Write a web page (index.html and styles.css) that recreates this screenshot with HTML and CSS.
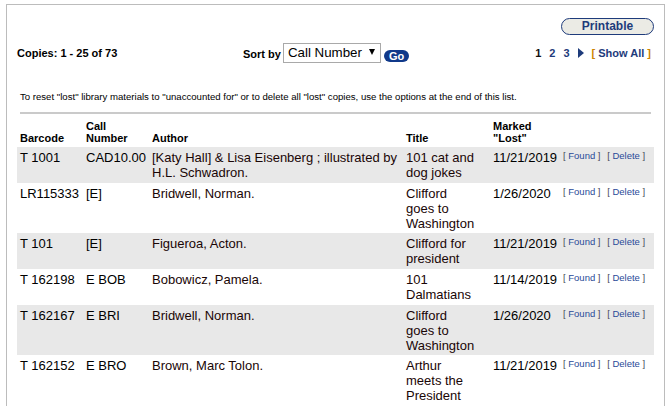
FILE: index.html
```html
<!DOCTYPE html>
<html>
<head>
<meta charset="utf-8">
<link rel="stylesheet" href="styles.css">
</head>
<body>
<div class="page">
  <div class="print-row">
    <span class="printable">Printable</span>
  </div>
  <div class="controls">
    <div class="copies">Copies: 1 - 25 of 73</div>
    <div class="sort">
      <span class="sort-label">Sort by</span>
      <span class="select"><span class="select-text">Call Number</span><span class="arrow"></span></span>
      <span class="go">Go</span>
    </div>
    <div class="pager">
      <span class="pg current">1</span>
      <span class="pg">2</span>
      <span class="pg">3</span>
      <span class="next"></span>
      <span class="showall"><span class="br">[</span> Show All <span class="br">]</span></span>
    </div>
  </div>
  <p class="note">To reset "lost" library materials to "unaccounted for" or to delete all "lost" copies, use the options at the end of this list.</p>
  <div class="rule"></div>
  <table class="list">
    <colgroup>
      <col class="c-bar"><col class="c-call"><col class="c-auth"><col class="c-title"><col class="c-date"><col class="c-act">
    </colgroup>
    <thead>
      <tr>
        <th>Barcode</th>
        <th>Call<br>Number</th>
        <th>Author</th>
        <th class="t-title">Title</th>
        <th>Marked<br>"Lost"</th>
        <th></th>
      </tr>
    </thead>
    <tbody>
      <tr class="alt">
        <td>T 1001</td><td>CAD10.00</td><td class="auth">[Katy Hall] &amp; Lisa Eisenberg ; illustrated by H.L. Schwadron.</td><td class="t-title">101 cat and dog jokes</td><td>11/21/2019</td>
        <td class="act"><span class="lk"><span class="b">[</span> Found <span class="b">]</span></span> <span class="lk del"><span class="b">[</span> Delete <span class="b">]</span></span></td>
      </tr>
      <tr>
        <td>LR115333</td><td>[E]</td><td class="auth">Bridwell, Norman.</td><td class="t-title">Clifford goes to Washington</td><td>1/26/2020</td>
        <td class="act"><span class="lk"><span class="b">[</span> Found <span class="b">]</span></span> <span class="lk del"><span class="b">[</span> Delete <span class="b">]</span></span></td>
      </tr>
      <tr class="alt">
        <td>T 101</td><td>[E]</td><td class="auth">Figueroa, Acton.</td><td class="t-title">Clifford for president</td><td>11/21/2019</td>
        <td class="act"><span class="lk"><span class="b">[</span> Found <span class="b">]</span></span> <span class="lk del"><span class="b">[</span> Delete <span class="b">]</span></span></td>
      </tr>
      <tr>
        <td>T 162198</td><td>E BOB</td><td class="auth">Bobowicz, Pamela.</td><td class="t-title">101 Dalmatians</td><td>11/14/2019</td>
        <td class="act"><span class="lk"><span class="b">[</span> Found <span class="b">]</span></span> <span class="lk del"><span class="b">[</span> Delete <span class="b">]</span></span></td>
      </tr>
      <tr class="alt">
        <td>T 162167</td><td>E BRI</td><td class="auth">Bridwell, Norman.</td><td class="t-title">Clifford goes to Washington</td><td>1/26/2020</td>
        <td class="act"><span class="lk"><span class="b">[</span> Found <span class="b">]</span></span> <span class="lk del"><span class="b">[</span> Delete <span class="b">]</span></span></td>
      </tr>
      <tr>
        <td>T 162152</td><td>E BRO</td><td class="auth">Brown, Marc Tolon.</td><td class="t-title">Arthur meets the President</td><td>11/21/2019</td>
        <td class="act"><span class="lk"><span class="b">[</span> Found <span class="b">]</span></span> <span class="lk del"><span class="b">[</span> Delete <span class="b">]</span></span></td>
      </tr>
    </tbody>
  </table>
</div>
</body>
</html>
```

FILE: styles.css
```css
html, body {
  margin: 0;
  padding: 0;
  background: #ffffff;
}
body {
  font-family: "Liberation Sans", Arial, sans-serif;
  color: #000;
  overflow: hidden;
}
.page {
  margin: 4px 5px 0 6px;
  border: 1px solid #bcbcbc;
  border-bottom: none;
  padding: 13px 10px 0 10px;
  min-height: 460px;
}
.print-row {
  display: flex;
  justify-content: flex-end;
}
.printable {
  box-sizing: border-box;
  width: 93px;
  height: 17px;
  border: 1px solid #1e3b7b;
  border-radius: 9px;
  background: #ebebe5;
  color: #1e3b7b;
  font-weight: bold;
  font-size: 12px;
  line-height: 15px;
  text-align: center;
}
.controls {
  display: grid;
  grid-template-columns: 226px auto 1fr;
  align-items: center;
  margin-top: 8px;
  height: 20px;
}
.copies {
  font-size: 11px;
  font-weight: bold;
}
.sort {
  display: flex;
  align-items: center;
  height: 20px;
}
.sort-label {
  font-size: 11px;
  font-weight: bold;
  margin-right: 2px;
  margin-top: 2px;
}
.select {
  box-sizing: border-box;
  display: flex;
  align-items: center;
  width: 98px;
  height: 20px;
  border: 1px solid #a9a9a9;
  background: #fff;
  padding-left: 4px;
  padding-right: 5px;
}
.select-text {
  font-size: 13.33px;
  line-height: 16px;
}
.arrow {
  margin-left: auto;
  margin-top: -3px;
  width: 0;
  height: 0;
  border-left: 3.7px solid transparent;
  border-right: 3.7px solid transparent;
  border-top: 6px solid #000;
}
.go {
  align-self: flex-end;
  margin-left: 3.5px;
  margin-bottom: 1px;
  height: 12px;
  padding: 0 4.5px;
  border-radius: 6px;
  background: #10398a;
  color: #fff;
  font-weight: bold;
  font-size: 11px;
  line-height: 12px;
}
.pager {
  display: flex;
  justify-content: flex-end;
  align-items: center;
  gap: 8px;
  padding-right: 3px;
  font-size: 11px;
  font-weight: bold;
  color: #1e3b7b;
}
.pg.current {
  color: #111;
}
.next {
  width: 0;
  height: 0;
  border-top: 5px solid transparent;
  border-bottom: 5px solid transparent;
  border-left: 6px solid #1e3b7b;
}
.showall .br {
  color: #cc8400;
}
.note {
  margin: 28px 0 0 3px;
  font-size: 9.6px;
  color: #000;
}
.rule {
  height: 2px;
  background: #cacaca;
  margin: 10px 3px 0 3px;
}
.list {
  width: 637px;
  border-collapse: collapse;
  table-layout: fixed;
}
.c-bar { width: 66px; }
.c-call { width: 66px; }
.c-auth { width: 254px; }
.c-title { width: 87px; }
.c-date { width: 70px; }
.c-act { width: 94px; }
.list th {
  text-align: left;
  vertical-align: bottom;
  font-size: 11px;
  font-weight: bold;
  padding: 0 3px 3px 3px;
  height: 30px;
}
.list td {
  font-size: 13px;
  line-height: 15px;
  vertical-align: top;
  padding: 3px 3px 2.7px 3px;
}
.list td.auth,
.list td.t-title {
  color: #1a0606;
}
.list .t-title {
  padding-right: 14px;
}
.list tr.alt td {
  background: #e8e8e8;
}
.list td.act {
  font-size: 9.5px;
  line-height: 12px;
  white-space: nowrap;
}
.lk {
  color: #2a4a98;
}
.lk .b {
  color: #4a4a5a;
}
.lk.del {
  margin-left: 4px;
}
```
